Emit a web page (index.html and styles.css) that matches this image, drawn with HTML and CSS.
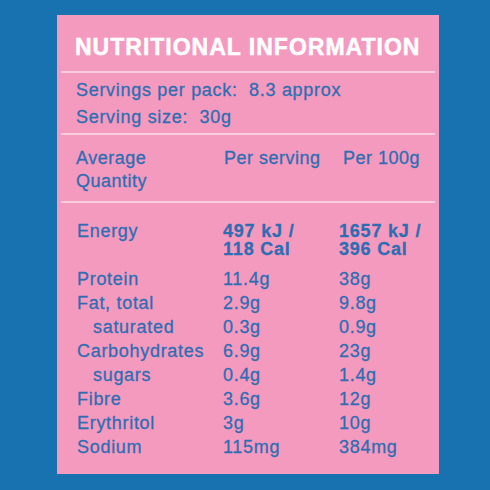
FILE: index.html
```html
<!DOCTYPE html>
<html lang="en">
<head>
    <meta charset="UTF-8">
    <meta name="viewport" content="width=device-width, initial-scale=1.0">
    <title>Nutritional Information</title>
    <link rel="stylesheet" href="styles.css">
</head>
<body>
    <div class="panel">
        <h1 class="title">NUTRITIONAL INFORMATION</h1>

        <div class="servings">
            <p>Servings per pack:&nbsp; 8.3 approx</p>
            <p>Serving size:&nbsp; 30g</p>
        </div>

        <div class="head-row">
            <div>Average<br>Quantity</div>
            <div class="col-serv">Per serving</div>
            <div class="col-100">Per 100g</div>
        </div>

        <div class="facts">
            <div class="row energy">
                <div>Energy</div>
                <div class="bold">497 kJ /<br>118 Cal</div>
                <div class="bold">1657 kJ /<br>396 Cal</div>
            </div>
            <div class="row">
                <div>Protein</div><div>11.4g</div><div>38g</div>
            </div>
            <div class="row">
                <div>Fat, total</div><div>2.9g</div><div>9.8g</div>
            </div>
            <div class="row">
                <div class="sub">saturated</div><div>0.3g</div><div>0.9g</div>
            </div>
            <div class="row">
                <div>Carbohydrates</div><div>6.9g</div><div>23g</div>
            </div>
            <div class="row">
                <div class="sub">sugars</div><div>0.4g</div><div>1.4g</div>
            </div>
            <div class="row">
                <div>Fibre</div><div>3.6g</div><div>12g</div>
            </div>
            <div class="row">
                <div>Erythritol</div><div>3g</div><div>10g</div>
            </div>
            <div class="row">
                <div>Sodium</div><div>115mg</div><div>384mg</div>
            </div>
        </div>
    </div>
</body>
</html>
```

FILE: styles.css
```css
body, html {
    margin: 0;
    padding: 0;
    width: 100%;
    height: 100%;
    background-color: #1872b0;
    font-family: 'Liberation Sans', Arial, sans-serif;
    color: #2f6db2;
    overflow: hidden;
}
body {
    padding-top: 15px;
    box-sizing: border-box;
}

.panel {
    width: 382px;
    height: 459px;
    margin-left: 57px;
    padding: 0 4px;
    box-sizing: border-box;
    background: #f59abf;
    -webkit-text-stroke: 0.3px currentColor;
}

.title {
    margin: 0;
    padding: 18px 0 10px 14px;
    font-size: 23px;
    line-height: 28px;
    font-weight: bold;
    letter-spacing: 1px;
    color: #fff;
    -webkit-text-stroke: 0.5px #fff;
    border-bottom: 2px solid #f9cfe0;
}

.servings {
    padding: 4px 0 2px 15px;
    font-size: 18px;
    line-height: 27px;
    letter-spacing: 0.7px;
    border-bottom: 2px solid #f9cfe0;
}
.servings p {
    margin: 0;
}

.head-row, .row {
    display: grid;
    grid-template-columns: 146px 116px auto;
}

.head-row {
    padding: 12px 0 8px 15px;
    font-size: 18px;
    line-height: 23px;
    letter-spacing: 0.5px;
    border-bottom: 2px solid #f9cfe0;
}
.head-row .col-serv {
    padding-left: 2px;
}
.head-row .col-100 {
    padding-left: 5px;
}

.facts {
    padding: 19px 0 0 16px;
    font-size: 18px;
    line-height: 24px;
    letter-spacing: 0.7px;
}
.row.energy {
    line-height: 18px;
    margin-bottom: 9px;
}
.bold {
    font-weight: bold;
    letter-spacing: 0.8px;
}
.sub {
    padding-left: 16px;
}
```
